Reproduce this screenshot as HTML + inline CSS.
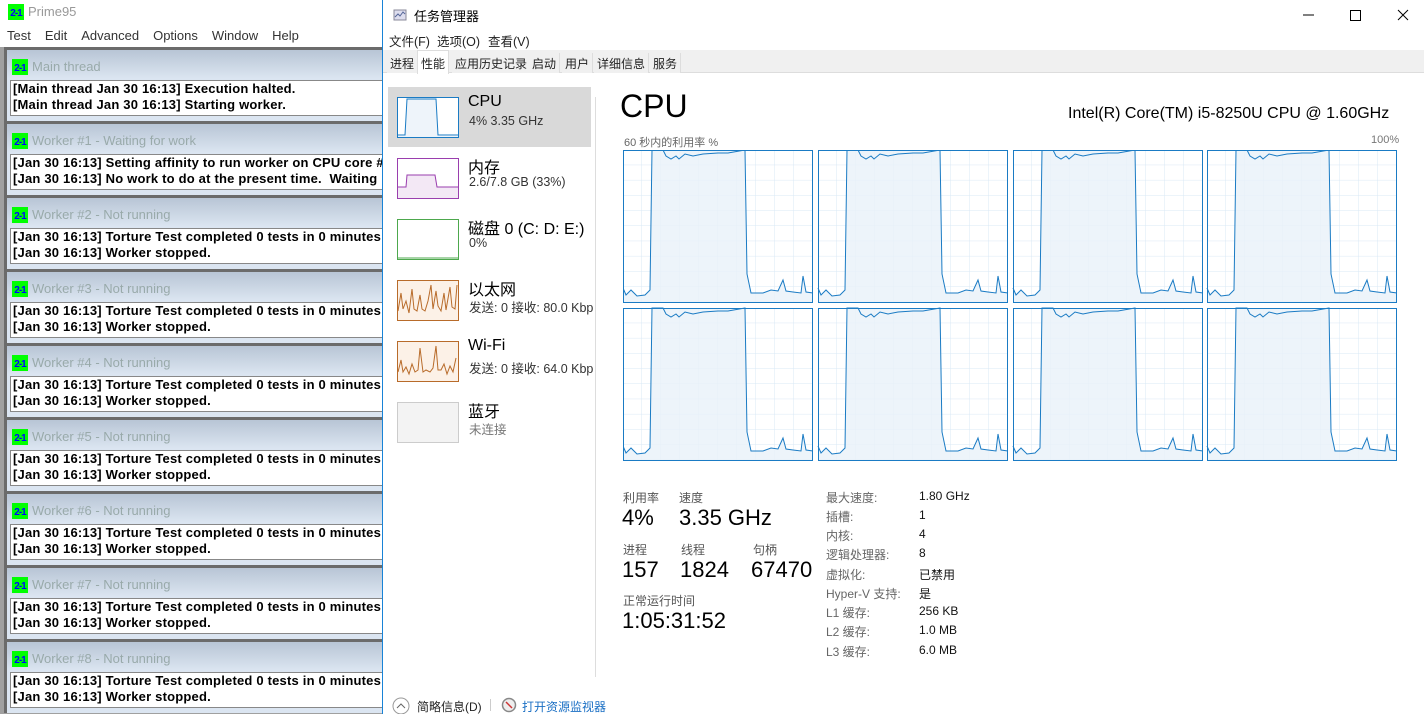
<!DOCTYPE html>
<html><head><meta charset="utf-8"><style>
*{margin:0;padding:0;box-sizing:border-box}
body{width:1424px;height:714px;overflow:hidden;position:relative;background:#fff;font-family:"Liberation Sans","Noto Sans CJK SC",sans-serif}
.abs{position:absolute}
#p95{left:0;top:0;width:383px;height:714px;background:#fff}
.p95t{left:28px;top:4px;font-size:13px;color:#999}
.ico{width:16px;height:16px;background:#0f0;color:#00f;font:bold 10px/1 "Liberation Sans",sans-serif;text-align:center;padding-top:5px;letter-spacing:-1px}
.menu{top:28px;left:7px;font-size:13px;color:#333;word-spacing:0}
.menu span{margin-right:14px}
#mdi{left:0;top:47px;width:383px;height:667px;background:#a0a0a0}
.cw{position:absolute;left:4px;width:379px;height:74px;border-top:3px solid #6b6b6b;border-left:3px solid #6b6b6b;background:linear-gradient(#b8c5d5,#dbe5f1 40%,#dbe5f1)}
.cw .ttl{position:absolute;left:25px;top:9px;font-size:13px;color:#9aa}
.cw .ic{position:absolute;left:5px;top:9px}
.cw .box{position:absolute;left:3px;top:30px;width:380px;height:36px;background:#fff;border:1px solid #888;border-right:none;font:bold 13px/16px "Liberation Sans",sans-serif;letter-spacing:.2px;color:#000;padding-left:2px;white-space:nowrap;overflow:hidden}
#tm{left:382px;top:0;width:1042px;height:714px;background:#fff;border-left:1px solid #1883d7}
.tabs{left:0;top:50px;width:1042px;height:23px;background:#f0f0f0;border-bottom:1px solid #ddd}
.tab{position:absolute;top:3px;height:20px;font-size:12px;color:#222;border-right:1px solid #ddd;padding:2px 3px;background:#f0f0f0;white-space:nowrap}
.side .it{position:absolute;left:5px;width:203px;height:60px}
.thumb{position:absolute;left:9px;top:10px;width:62px;height:41px;border:1px solid}
.lbl1{position:absolute;left:80px;top:6px;font-size:16px;color:#000}
.lbl2{position:absolute;left:81px;top:27px;font-size:12.5px;color:#333;white-space:nowrap}
.sl{font-size:12px;color:#555;position:absolute}
.sv{font-size:22px;color:#000;position:absolute}
.kl{font-size:12px;color:#666;position:absolute}
.kv{font-size:12px;color:#111;position:absolute}
</style></head><body>
<div id="p95" class="abs">
 <div class="abs ico" style="left:8px;top:4px">2-1</div>
 <div class="abs p95t">Prime95</div>
 <div class="abs menu"><span>Test</span><span>Edit</span><span>Advanced</span><span>Options</span><span>Window</span><span>Help</span></div>
 <div id="mdi" class="abs">
  <div class="cw" style="top:0"><div class="ic ico">2-1</div><div class="ttl">Main thread</div><div class="box">[Main thread Jan 30 16:13] Execution halted.<br>[Main thread Jan 30 16:13] Starting worker.</div></div>
  <div class="cw" style="top:74px"><div class="ic ico">2-1</div><div class="ttl">Worker #1 - Waiting for work</div><div class="box">[Jan 30 16:13] Setting affinity to run worker on CPU core #1<br>[Jan 30 16:13] No work to do at the present time.&nbsp; Waiting</div></div>
  <div class="cw" style="top:148px"><div class="ic ico">2-1</div><div class="ttl">Worker #2 - Not running</div><div class="box">[Jan 30 16:13] Torture Test completed 0 tests in 0 minutes<br>[Jan 30 16:13] Worker stopped.</div></div>
  <div class="cw" style="top:222px"><div class="ic ico">2-1</div><div class="ttl">Worker #3 - Not running</div><div class="box">[Jan 30 16:13] Torture Test completed 0 tests in 0 minutes<br>[Jan 30 16:13] Worker stopped.</div></div>
  <div class="cw" style="top:296px"><div class="ic ico">2-1</div><div class="ttl">Worker #4 - Not running</div><div class="box">[Jan 30 16:13] Torture Test completed 0 tests in 0 minutes<br>[Jan 30 16:13] Worker stopped.</div></div>
  <div class="cw" style="top:370px"><div class="ic ico">2-1</div><div class="ttl">Worker #5 - Not running</div><div class="box">[Jan 30 16:13] Torture Test completed 0 tests in 0 minutes<br>[Jan 30 16:13] Worker stopped.</div></div>
  <div class="cw" style="top:444px"><div class="ic ico">2-1</div><div class="ttl">Worker #6 - Not running</div><div class="box">[Jan 30 16:13] Torture Test completed 0 tests in 0 minutes<br>[Jan 30 16:13] Worker stopped.</div></div>
  <div class="cw" style="top:518px"><div class="ic ico">2-1</div><div class="ttl">Worker #7 - Not running</div><div class="box">[Jan 30 16:13] Torture Test completed 0 tests in 0 minutes<br>[Jan 30 16:13] Worker stopped.</div></div>
  <div class="cw" style="top:592px"><div class="ic ico">2-1</div><div class="ttl">Worker #8 - Not running</div><div class="box">[Jan 30 16:13] Torture Test completed 0 tests in 0 minutes<br>[Jan 30 16:13] Worker stopped.</div></div>
 </div>
</div>

<div id="tm" class="abs">
 <svg class="abs" style="left:10px;top:8px" width="14" height="14"><rect x="1" y="2" width="12" height="10" fill="#dde" stroke="#889"/><polyline points="2,9 5,6 7,8 10,4 12,6" fill="none" stroke="#569"/></svg>
 <div class="abs" style="left:31px;top:6px;font-size:13px;color:#000">任务管理器</div>
 <svg class="abs" style="left:920px;top:8px" width="110" height="14"><line x1="0" y1="7" x2="11" y2="7" stroke="#000"/><rect x="47.5" y="2.5" width="10" height="10" fill="none" stroke="#000"/><path d="M95 2l10 10M105 2l-10 10" stroke="#000"/></svg>
 <div class="abs" style="left:6px;top:31px;font-size:12.5px;color:#222">文件(F)</div>
 <div class="abs" style="left:54px;top:31px;font-size:12.5px;color:#222">选项(O)</div>
 <div class="abs" style="left:105px;top:31px;font-size:12.5px;color:#222">查看(V)</div>
 <div class="abs tabs">
  <div class="tab" style="left:4px">进程</div>
  <div class="tab" style="left:34px;top:0;height:24px;background:#fff;border:1px solid #ddd;border-bottom:none;padding-top:4px">性能</div>
  <div class="tab" style="left:69px">应用历史记录</div>
  <div class="tab" style="left:146px">启动</div>
  <div class="tab" style="left:179px">用户</div>
  <div class="tab" style="left:211px">详细信息</div>
  <div class="tab" style="left:267px">服务</div>
 </div>
 <div class="side">
  <div class="it" style="top:87px;background:#d9d9d9"><div class="thumb" style="border-color:#1a7bc4;background:#fff"><svg width="60" height="39"><path d="M0 38 L7 38 L9 1 L38 1 L40 38 L60 38 L60 39 L0 39Z" fill="#eef4fa"/><polyline points="0,37 7,37 9,1 38,1 40,37 60,37" fill="none" stroke="#1a7bc4"/></svg></div><div class="lbl1">CPU</div><div class="lbl2">4% 3.35 GHz</div></div>
  <div class="it" style="top:148px"><div class="thumb" style="border-color:#9a3eae;background:#fff"><svg width="60" height="39"><path d="M0 28 L8 28 L9 16 L37 16 L39 28 L60 28 L60 39 L0 39Z" fill="#f3e8f5"/><polyline points="0,28 8,28 9,16 37,16 39,28 60,28" fill="none" stroke="#9a3eae"/></svg></div><div class="lbl1">内存</div><div class="lbl2">2.6/7.8 GB (33%)</div></div>
  <div class="it" style="top:209px"><div class="thumb" style="border-color:#4da84d;background:#fff"><svg width="60" height="39"><line x1="0" y1="38" x2="60" y2="38" stroke="#4da84d"/></svg></div><div class="lbl1">磁盘 0 (C: D: E:)</div><div class="lbl2">0%</div></div>
  <div class="it" style="top:270px"><div class="thumb" style="border-color:#b86b2a;background:#fcf1e7"><svg width="60" height="39"><polyline points="0,30 3,12 5,28 8,20 11,32 14,8 16,28 19,30 22,14 24,28 27,30 30,20 33,4 35,28 38,10 40,25 43,30 46,12 48,29 52,6 54,26 57,28 59,4" fill="none" stroke="#b86b2a"/></svg></div><div class="lbl1">以太网</div><div class="lbl2">发送: 0 接收: 80.0 Kbp</div></div>
  <div class="it" style="top:331px"><div class="thumb" style="border-color:#b86b2a;background:#fcf1e7"><svg width="60" height="39"><polyline points="0,30 3,18 5,30 8,25 11,32 14,22 17,30 20,28 22,6 25,30 28,28 32,30 35,26 38,4 40,28 43,28 46,22 49,32 52,24 55,30 58,16" fill="none" stroke="#b86b2a"/></svg></div><div class="lbl1">Wi-Fi</div><div class="lbl2">发送: 0 接收: 64.0 Kbp</div></div>
  <div class="it" style="top:392px"><div class="thumb" style="border-color:#ccc;background:#f3f3f3"></div><div class="lbl1">蓝牙</div><div class="lbl2" style="color:#777">未连接</div></div>
 </div>
 <div class="abs" style="left:212px;top:97px;width:1px;height:580px;background:#ddd"></div>
 <div class="abs" style="left:237px;top:88px;font-size:32px;color:#000">CPU</div>
 <div class="abs" style="left:685px;top:105px;font-size:16px;color:#000">Intel(R) Core(TM) i5-8250U CPU @ 1.60GHz</div>
 <div class="abs" style="left:241px;top:134px;font-size:11px;color:#666">60 秒内的利用率 %</div>
 <div class="abs" style="left:988px;top:134px;font-size:11px;color:#777">100%</div>
 <svg class="abs" style="left:240px;top:150px" width="780" height="314">
  <defs>
   <pattern id="gp" width="19" height="15.2" patternUnits="userSpaceOnUse"><path d="M19 0V15.2M0 15.2H19" fill="none" stroke="#d9e8f5"/></pattern>
   <g id="c">
    <rect x="0" y="0" width="190" height="153" fill="#fff"/>
    <rect x="0" y="0" width="190" height="153" fill="url(#gp)"/>
    <path d="M0 138 L3 145 L8 140 L14 146 L22 145 L27 140 L29 0 L122 0 L124 124 L128 143 L140 143 L148 140 L155 141 L160 130 L163 141 L170 142 L178 143 L180 126 L183 142 L190 143 L190 153 L0 153Z" fill="#e8f1f9" fill-opacity=".8"/>
    <polyline points="0,138 3,145 8,140 14,146 22,145 27,140 29,0 40,0 43,6 48,9 53,6 56,9 62,4 70,6 80,4 95,3 105,3 122,0 124,124 128,143 140,143 148,140 155,141 160,130 163,141 170,142 178,143 180,126 183,142 190,143" fill="none" stroke="#1a7bc4"/>
    <rect x=".5" y=".5" width="189" height="152" fill="none" stroke="#1a7bc4"/>
   </g>
  </defs>
  <use href="#c" x="0" y="0"/><use href="#c" x="195" y="0"/><use href="#c" x="390" y="0"/><use href="#c" x="584" y="0"/>
  <use href="#c" x="0" y="158"/><use href="#c" x="195" y="158"/><use href="#c" x="390" y="158"/><use href="#c" x="584" y="158"/>
 </svg>
 <div class="sl" style="left:240px;top:489px">利用率</div><div class="sl" style="left:296px;top:489px">速度</div>
 <div class="sv" style="left:239px;top:505px">4%</div><div class="sv" style="left:296px;top:505px">3.35 GHz</div>
 <div class="sl" style="left:240px;top:541px">进程</div><div class="sl" style="left:298px;top:541px">线程</div><div class="sl" style="left:370px;top:541px">句柄</div>
 <div class="sv" style="left:239px;top:557px">157</div><div class="sv" style="left:297px;top:557px">1824</div><div class="sv" style="left:368px;top:557px">67470</div>
 <div class="sl" style="left:240px;top:592px">正常运行时间</div>
 <div class="sv" style="left:239px;top:608px">1:05:31:52</div>
 <div class="kl" style="left:443px;top:489px">最大速度:</div><div class="kv" style="left:536px;top:489px">1.80 GHz</div>
 <div class="kl" style="left:443px;top:508px">插槽:</div><div class="kv" style="left:536px;top:508px">1</div>
 <div class="kl" style="left:443px;top:527px">内核:</div><div class="kv" style="left:536px;top:527px">4</div>
 <div class="kl" style="left:443px;top:546px">逻辑处理器:</div><div class="kv" style="left:536px;top:546px">8</div>
 <div class="kl" style="left:443px;top:566px">虚拟化:</div><div class="kv" style="left:536px;top:566px">已禁用</div>
 <div class="kl" style="left:443px;top:585px">Hyper-V 支持:</div><div class="kv" style="left:536px;top:585px">是</div>
 <div class="kl" style="left:443px;top:604px">L1 缓存:</div><div class="kv" style="left:536px;top:604px">256 KB</div>
 <div class="kl" style="left:443px;top:623px">L2 缓存:</div><div class="kv" style="left:536px;top:623px">1.0 MB</div>
 <div class="kl" style="left:443px;top:643px">L3 缓存:</div><div class="kv" style="left:536px;top:643px">6.0 MB</div>
 <svg class="abs" style="left:9px;top:696px" width="20" height="18"><circle cx="9" cy="10" r="8" fill="none" stroke="#999"/><polyline points="5,12 9,8 13,12" fill="none" stroke="#666"/></svg>
 <div class="abs" style="left:34px;top:698px;font-size:12px;color:#222">简略信息(D)</div>
 <div class="abs" style="left:107px;top:699px;width:1px;height:12px;background:#ccc"></div>
 <svg class="abs" style="left:118px;top:697px" width="16" height="16"><circle cx="8" cy="8" r="6.5" fill="#eee" stroke="#888" stroke-width="1.5"/><line x1="5" y1="5" x2="11" y2="11" stroke="#c33" stroke-width="1.5"/></svg>
 <div class="abs" style="left:139px;top:698px;font-size:12px;color:#1a6fc4">打开资源监视器</div>
</div>
</body></html>
